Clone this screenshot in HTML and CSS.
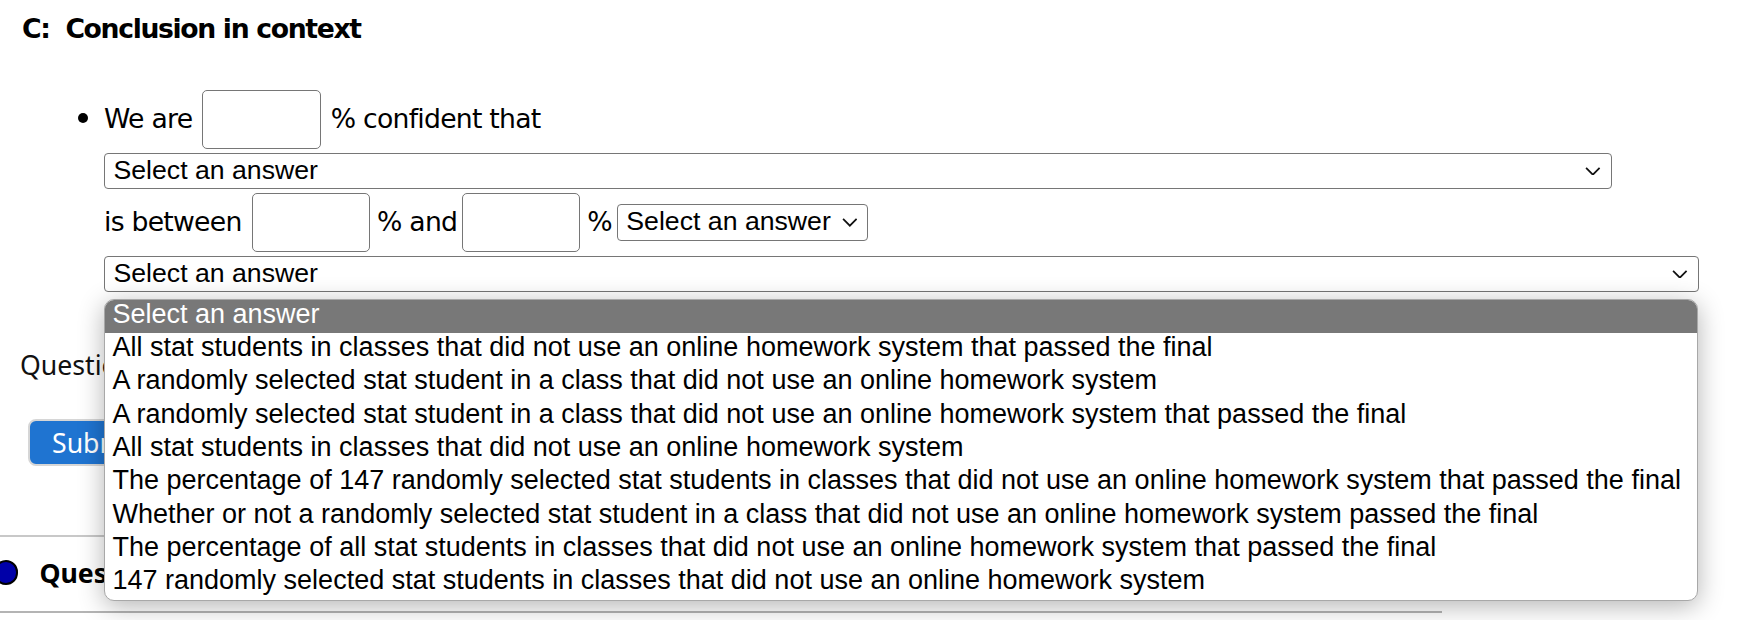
FILE: index.html
```html
<!DOCTYPE html>
<html lang="en">
<head>
<meta charset="utf-8">
<title>Conclusion in context</title>
<link rel="stylesheet" href="styles.css">
</head>
<body>
<div class="page">
  <h3 class="part-title">C:&nbsp; Conclusion in context</h3>

  <ul class="answer-list">
    <li class="answer-item">
      <div class="bullet-col"><span class="bullet"></span></div>
      <div class="answer-body">
        <div class="line">
          <span class="label">We are</span>
          <input class="num-input" type="text" aria-label="confidence level">
          <span class="label">% confident that</span>
        </div>

        <div class="select select-wide-1">
          <span class="select-text">Select an answer</span>
          <svg class="chevron" viewBox="0 0 16 9" aria-hidden="true"><polyline points="1,1 8,8 15,1"/></svg>
        </div>

        <div class="line">
          <span class="label">is between</span>
          <input class="num-input" type="text" aria-label="lower bound">
          <span class="label label-and">% and</span>
          <input class="num-input" type="text" aria-label="upper bound">
          <span class="label label-pct">%</span>
          <div class="select select-small">
            <span class="select-text">Select an answer</span>
            <svg class="chevron" viewBox="0 0 16 9" aria-hidden="true"><polyline points="1,1 8,8 15,1"/></svg>
          </div>
        </div>

        <div class="select-wrap">
          <div class="select select-wide-2">
            <span class="select-text">Select an answer</span>
            <svg class="chevron" viewBox="0 0 16 9" aria-hidden="true"><polyline points="1,1 8,8 15,1"/></svg>
          </div>
          <ul class="dropdown">
            <li class="option option-selected">Select an answer</li>
            <li class="option">All stat students in classes that did not use an online homework system that passed the final</li>
            <li class="option">A randomly selected stat student in a class that did not use an online homework system</li>
            <li class="option">A randomly selected stat student in a class that did not use an online homework system that passed the final</li>
            <li class="option">All stat students in classes that did not use an online homework system</li>
            <li class="option">The percentage of 147 randomly selected stat students in classes that did not use an online homework system that passed the final</li>
            <li class="option">Whether or not a randomly selected stat student in a class that did not use an online homework system passed the final</li>
            <li class="option">The percentage of all stat students in classes that did not use an online homework system that passed the final</li>
            <li class="option">147 randomly selected stat students in classes that did not use an online homework system</li>
          </ul>
        </div>
      </div>
    </li>
  </ul>

  <p class="question-help">Question Help: Video</p>
  <button class="submit-btn" type="button">Submit Question</button>

  <div class="rule"></div>
  <div class="question-row">
    <span class="status-dot"></span>
    <strong class="question-title">Question 6</strong>
  </div>
  <div class="rule rule-bottom"></div>
</div>
</body>
</html>
```

FILE: styles.css
```css
* { box-sizing: border-box; }

html, body {
  margin: 0;
  padding: 0;
  background: #fff;
}

body {
  width: 1749px;
  height: 620px;
  overflow: hidden;
  font-family: "DejaVu Sans", Verdana, sans-serif;
  color: #000;
}

.page {
  padding-top: 12.5px;
}

.part-title {
  margin: 0 0 0 22px;
  font-size: 26.67px;
  line-height: 32px;
  font-weight: bold;
  letter-spacing: -1.35px;
}

.answer-list {
  list-style: none;
  margin: 45.2px 0 0 0;
  padding: 0;
}

.answer-item {
  display: flex;
}

.bullet-col {
  width: 104px;
  flex: none;
  padding-top: 23.6px;
}

.bullet {
  display: block;
  width: 10px;
  height: 10px;
  margin-left: 77.7px;
  border-radius: 50%;
  background: #000;
}

.answer-body {
  display: flex;
  flex-direction: column;
  gap: 3.5px;
}

.line {
  display: flex;
  align-items: center;
  height: 59.4px;
}

.label {
  font-size: 26.67px;
  line-height: 32px;
  letter-spacing: -0.75px;
  white-space: nowrap;
}

.num-input {
  width: 118.5px;
  height: 59.4px;
  margin: 0 10px;
  padding: 0;
  border: 1.67px solid #767676;
  border-radius: 5px;
  background: #fff;
  font: inherit;
}

.label-and { margin-left: -3px; margin-right: -5.5px; }
.label-pct { margin-left: -3px; margin-right: 5px; }

.select {
  display: flex;
  align-items: center;
  justify-content: space-between;
  height: 36.6px;
  padding: 0 10px 0 8.5px;
  border: 1.67px solid #767676;
  border-radius: 4px;
  background: #fff;
  font-family: "Liberation Sans", Arial, sans-serif;
  font-size: 26.67px;
  line-height: 29.8px;
  white-space: nowrap;
}

.select-wide-1 { width: 1508px; }
.select-wide-2 { width: 1595px; }
.select-small { width: 251.6px; height: 37.4px; }

.chevron {
  width: 15.7px;
  height: 8.7px;
  flex: none;
  fill: none;
  stroke: #111;
  stroke-width: 1.8;
}

.select-wrap {
  position: relative;
}

.dropdown {
  position: absolute;
  top: 43px;
  left: 0;
  z-index: 2;
  width: 1594px;
  margin: 0;
  padding: 0;
  list-style: none;
  background: #fff;
  border: 1.5px solid #a8a8a8;
  border-radius: 10px;
  overflow: hidden;
  box-shadow: 0 5px 26px rgba(0, 0, 0, 0.3);
  font-family: "Liberation Sans", Arial, sans-serif;
  font-size: 27px;
}

.option {
  height: 33.33px;
  padding: 0 0 0 7.5px;
  line-height: 28.2px;
  white-space: nowrap;
  color: #000;
}

.option-selected {
  background: #787878;
  color: #fff;
}

.question-help {
  margin: 54.6px 0 0 20px;
  font-family: "Noto Sans", "Open Sans", sans-serif;
  font-size: 26.67px;
  line-height: 36px;
  color: #111;
}

.submit-btn {
  display: block;
  height: 46.4px;
  margin: 36.7px 0 0 28px;
  padding: 0 22px;
  border: 2px solid #d6d6d6;
  border-radius: 8px;
  background: #1f74d1;
  color: #fff;
  font-family: "Noto Sans", "Open Sans", sans-serif;
  font-size: 26.67px;
  line-height: 36px;
}

.rule {
  width: 1442px;
  height: 1.7px;
  margin-top: 69px;
  background: #c8c8c8;
}

.question-row {
  display: flex;
  align-items: center;
  height: 36px;
  margin-top: 18.3px;
}

.status-dot {
  width: 24.7px;
  height: 24.7px;
  margin-left: -6.3px;
  flex: none;
  border: 2.2px solid #000;
  border-radius: 50%;
  background: #0000a8;
}

.question-title {
  margin-left: 21px;
  font-family: "Noto Sans", "Open Sans", sans-serif;
  font-size: 26.67px;
  line-height: 36px;
  font-weight: bold;
}

.rule-bottom {
  margin-top: 20px;
  height: 2px;
  background: #b4b4b4;
}
```
